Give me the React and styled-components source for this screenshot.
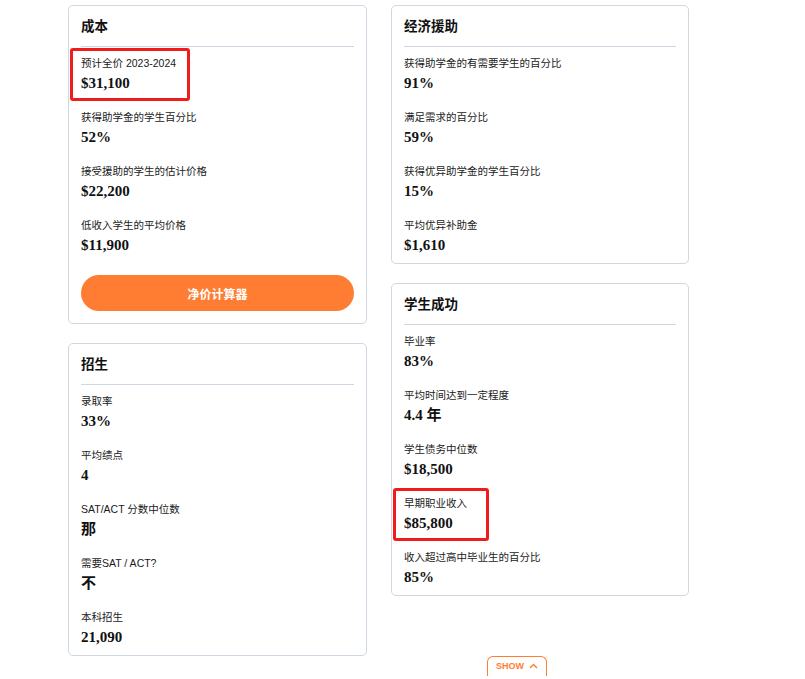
import React from 'react';
import styled, { createGlobalStyle } from 'styled-components';

const GlobalStyle = createGlobalStyle`
  body {
    margin: 0;
    background: #fff;
    color: #111;
    font-family: "Liberation Sans", "Noto Sans CJK SC", sans-serif;
  }
`;

const cost = [
  { label: '预计全价 2023-2024', value: '$31,100', box: 120 },
  { label: '获得助学金的学生百分比', value: '52%' },
  { label: '接受援助的学生的估计价格', value: '$22,200' },
  { label: '低收入学生的平均价格', value: '$11,900' },
];

const admission = [
  { label: '录取率', value: '33%' },
  { label: '平均绩点', value: '4' },
  { label: 'SAT/ACT 分数中位数', value: '那' },
  { label: '需要SAT / ACT?', value: '不' },
  { label: '本科招生', value: '21,090' },
];

const aid = [
  { label: '获得助学金的有需要学生的百分比', value: '91%' },
  { label: '满足需求的百分比', value: '59%' },
  { label: '获得优异助学金的学生百分比', value: '15%' },
  { label: '平均优异补助金', value: '$1,610' },
];

const success = [
  { label: '毕业率', value: '83%' },
  { label: '平均时间达到一定程度', value: '4.4 年' },
  { label: '学生债务中位数', value: '$18,500' },
  { label: '早期职业收入', value: '$85,800', box: 96 },
  { label: '收入超过高中毕业生的百分比', value: '85%' },
];

const Card = ({ title, items, children }) => (
  <Panel>
    <Title>{title}</Title>
    <List>
      {items.map((it) => (
        <Item key={it.label} $box={it.box}>
          <Label>{it.label}</Label>
          <Value>{it.value}</Value>
        </Item>
      ))}
    </List>
    {children}
  </Panel>
);

const App = () => (
  <>
    <GlobalStyle />
    <Page>
      <Grid>
        <Column>
          <Card title="成本" items={cost}>
            <CalcButton>净价计算器</CalcButton>
          </Card>
          <Card title="招生" items={admission} />
        </Column>
        <Column>
          <Card title="经济援助" items={aid} />
          <Card title="学生成功" items={success} />
        </Column>
      </Grid>
      <ShowTab>
        SHOW
        <svg width="9" height="6" viewBox="0 0 9 6" fill="none">
          <path d="M1 5 L4.5 1.5 L8 5" stroke="#ff7d33" strokeWidth="1.4" />
        </svg>
      </ShowTab>
    </Page>
  </>
);

const Page = styled.div`
  padding: 5px 0 0 68px;
  width: 620px;
`;

const Grid = styled.div`
  display: grid;
  grid-template-columns: 299px 298px;
  column-gap: 24px;
  align-items: start;
`;

const Column = styled.div`
  display: flex;
  flex-direction: column;
  gap: 19px;
`;

const Panel = styled.section`
  border: 1px solid #cfd7e2;
  border-radius: 5px;
  padding: 0 12px 8px;
  background: #fff;
`;

const Title = styled.h2`
  margin: 0;
  height: 37px;
  padding-bottom: 3px;
  display: flex;
  align-items: center;
  border-bottom: 1px solid #cfd7e2;
  font-size: 13.5px;
  font-weight: 700;
  font-family: "Noto Sans CJK SC", sans-serif;
  color: #111;
`;

const List = styled.div`
  display: flex;
  flex-direction: column;
  gap: 16px;
  padding-top: 8px;
`;

const Item = styled.div`
  position: relative;
  display: flex;
  flex-direction: column;
  gap: 2px;

  &::after {
    content: '';
    display: ${({ $box }) => ($box ? 'block' : 'none')};
    position: absolute;
    left: -11px;
    top: -7px;
    bottom: -8px;
    width: ${({ $box }) => $box || 0}px;
    border: 3px solid #f01b1b;
    border-radius: 3px;
    box-sizing: border-box;
  }
`;

const Label = styled.div`
  font-size: 10.5px;
  line-height: 16px;
  color: #1a1a1a;
  font-family: "Liberation Sans", "Noto Sans CJK SC", sans-serif;
`;

const Value = styled.div`
  font-size: 15px;
  line-height: 20px;
  font-weight: 700;
  color: #111;
  font-family: "Liberation Serif", "Noto Sans CJK SC", serif;
`;

const CalcButton = styled.button`
  display: block;
  width: 100%;
  height: 36px;
  margin: 20px 0 4px;
  border: none;
  border-radius: 18px;
  background: #ff7d33;
  color: #fff;
  font-size: 12px;
  font-weight: 700;
  font-family: "Noto Sans CJK SC", sans-serif;
  cursor: pointer;
`;

const ShowTab = styled.div`
  display: inline-flex;
  align-items: center;
  justify-content: center;
  gap: 5px;
  margin: 0 0 0 419px;
  width: 60px;
  height: 20px;
  padding-bottom: 2px;
  box-sizing: border-box;
  border: 1px solid #ff7d33;
  border-bottom: none;
  border-radius: 6px 6px 0 0;
  color: #ff7d33;
  font-size: 9px;
  font-weight: 700;
  font-family: "Liberation Sans", sans-serif;
  vertical-align: top;
`;

export default App;
